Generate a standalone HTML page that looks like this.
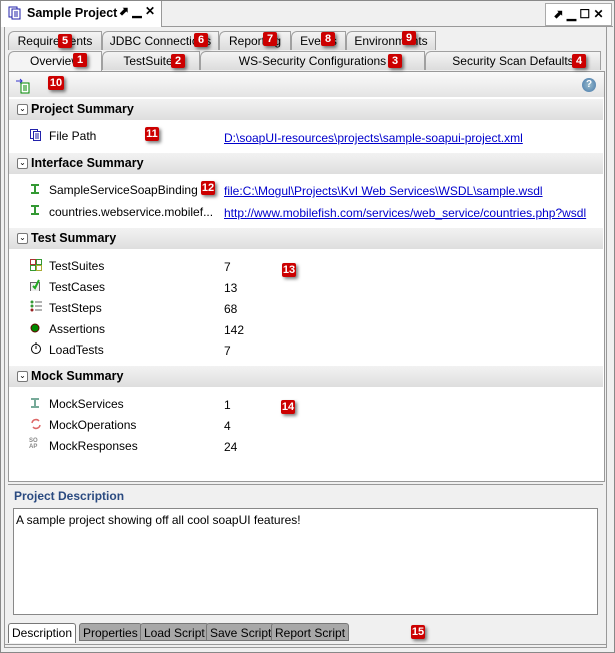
<!DOCTYPE html>
<html><head><style>
body{margin:0;width:615px;height:653px;background:#f0f0f0;font-family:"Liberation Sans",sans-serif;font-size:12px;color:#000;position:relative;overflow:hidden}
.a{position:absolute}
.tab{position:absolute;height:19px;border:1px solid #a0a0a0;border-bottom:none;background:linear-gradient(#f4f4f4,#dcdcdc);text-align:center;line-height:19px;font-size:12px;box-sizing:border-box;border-top-left-radius:6px}
.b{position:absolute;width:14px;height:14px;background:#c00;color:#fff;font-weight:bold;font-size:11px;line-height:14px;text-align:center;border-radius:2px;box-shadow:2px 2px 3px rgba(0,0,0,.5)}
.hd{position:absolute;left:9px;width:594px;height:21px;background:linear-gradient(#f2f2f2,#dedede);font-weight:bold;font-size:12.5px;line-height:21px}
.hd span.t{position:absolute;left:8px;top:5px;width:9px;height:9px;border:1px solid #777;border-radius:2px;background:#fff;font-size:8px;line-height:8px;text-align:center;font-weight:normal}
.hd b{position:absolute;left:22px}
.r{position:absolute;left:49px;font-size:12px}
.v{position:absolute;left:224px;font-size:12px}
.l{position:absolute;left:224px;color:#00c;text-decoration:underline}
.ic{position:absolute;left:30px;width:12px;height:12px}
.bt{position:absolute;top:623px;height:18px;border:1px solid #777;border-radius:3px 3px 0 0;background:#a8a8a8;line-height:18px;font-size:12px;box-sizing:border-box;padding:0 3px}
</style></head><body>
<!-- outer frame -->
<div class="a" style="left:0;top:0;width:613px;height:651px;border:1px solid #888"></div>
<div class="a" style="left:4px;top:27px;width:1px;height:620px;background:#999"></div>
<div class="a" style="left:606px;top:27px;width:1px;height:620px;background:#999"></div>
<div class="a" style="left:4px;top:647px;width:603px;height:1px;background:#999"></div>
<div class="a" style="left:1px;top:1px;width:160px;height:26px;background:#fff;border-right:1px solid #999"></div>
<div class="a" style="left:161px;top:26px;width:452px;height:1px;background:#999"></div>
<svg class="a" style="left:8px;top:6px" width="14" height="14"><rect x="1" y="1" width="8" height="10" fill="#fff" stroke="#22a"/><rect x="4" y="3" width="8" height="10" fill="#fff" stroke="#22a"/><path d="M6 6h4M6 8h4M6 10h4" stroke="#22a"/></svg>
<div class="a" style="left:27px;top:6px;font-weight:bold;font-size:12.5px">Sample Project</div>
<div class="a" style="left:119px;top:4px;font-size:12px;font-weight:bold">⬈ ▁ ✕</div>
<div class="a" style="left:545px;top:3px;width:65px;height:21px;border:1px solid #aaa;background:#fff;font-size:12px;font-weight:bold;line-height:20px;text-align:center">⬈ ▁ ☐ ✕</div>
<!-- tabs back row -->
<div class="tab" style="left:8px;top:31px;width:94px">Requirements</div>
<div class="tab" style="left:102px;top:31px;width:117px">JDBC Connections</div>
<div class="tab" style="left:219px;top:31px;width:72px">Reporting</div>
<div class="tab" style="left:291px;top:31px;width:55px">Events</div>
<div class="tab" style="left:346px;top:31px;width:90px">Environments</div>
<!-- front row -->
<div class="tab" style="left:8px;top:51px;width:94px;height:21px;background:#f4f4f4">Overview</div>
<div class="tab" style="left:102px;top:51px;width:98px">TestSuites</div>
<div class="tab" style="left:200px;top:51px;width:225px">WS-Security Configurations</div>
<div class="tab" style="left:425px;top:51px;width:176px">Security Scan Defaults</div>
<!-- content panel -->
<div class="a" style="left:8px;top:71px;width:595px;height:409px;background:#fff;border:1px solid #999"></div>
<div class="a" style="left:9px;top:72px;width:595px;height:25px;background:linear-gradient(#fafafa,#e4e4e4)"></div>
<svg class="a" style="left:15px;top:78px" width="16" height="16"><path d="M1 3h6M5 1l2 2-2 2" stroke="#33c" fill="none"/><rect x="6" y="5" width="8" height="10" fill="#fff" stroke="#080"/><path d="M8 8h4M8 10h4M8 12h4" stroke="#080"/></svg>
<div class="a" style="left:582px;top:78px;width:14px;height:14px;border-radius:50%;background:radial-gradient(#9bc,#47a);color:#fff;font-size:10px;font-weight:bold;text-align:center;line-height:14px">?</div>

<div class="hd" style="top:99px"><span class="t">⌄</span><b>Project Summary</b></div>
<svg class="ic" style="top:129px" width="12" height="13"><rect x="0.5" y="0.5" width="7" height="9" fill="#fff" stroke="#22a"/><rect x="3.5" y="2.5" width="7" height="9" fill="#fff" stroke="#22a"/><path d="M5 5h4M5 7h4M5 9h4" stroke="#22a"/></svg>
<div class="r" style="top:129px">File Path</div>
<div class="l" style="top:131px">D:\soapUI-resources\projects\sample-soapui-project.xml</div>

<div class="hd" style="top:153px"><span class="t">⌄</span><b>Interface Summary</b></div>
<svg class="ic" style="top:183px" width="12" height="12"><path d="M1 1h8v2H6v6h3v2H1V9h3V3H1z" fill="#393"/></svg>
<div class="r" style="top:183px">SampleServiceSoapBinding</div>
<div class="l" style="top:184px">file:C:\Mogul\Projects\KvI Web Services\WSDL\sample.wsdl</div>
<svg class="ic" style="top:204px" width="12" height="12"><path d="M1 1h8v2H6v6h3v2H1V9h3V3H1z" fill="#393"/></svg>
<div class="r" style="top:205px">countries.webservice.mobilef...</div>
<div class="l" style="top:206px">http://www.mobilefish.com/services/web_service/countries.php?wsdl</div>

<div class="hd" style="top:228px"><span class="t">⌄</span><b>Test Summary</b></div>
<svg class="ic" style="top:259px" width="12" height="12"><rect x="0.5" y="0.5" width="5" height="5" fill="#fff" stroke="#a33"/><rect x="6.5" y="0.5" width="5" height="5" fill="#fff" stroke="#393"/><rect x="0.5" y="6.5" width="5" height="5" fill="#fff" stroke="#393"/><rect x="6.5" y="6.5" width="5" height="5" fill="#fff" stroke="#aa3"/></svg>
<div class="r" style="top:259px">TestSuites</div><div class="v" style="top:260px">7</div>
<svg class="ic" style="top:279px" width="12" height="13"><rect x="0.5" y="3.5" width="9" height="9" fill="#eee" stroke="#666"/><path d="M3 7l2 2 4-8" stroke="#2a2" stroke-width="2" fill="none"/></svg>
<div class="r" style="top:280px">TestCases</div><div class="v" style="top:281px">13</div>
<svg class="ic" style="top:300px" width="13" height="12"><circle cx="2" cy="2" r="1.5" fill="#393"/><circle cx="2" cy="6" r="1.5" fill="#393"/><circle cx="2" cy="10" r="1.5" fill="#922"/><path d="M5 2h7M5 6h7M5 10h7" stroke="#666"/></svg>
<div class="r" style="top:301px">TestSteps</div><div class="v" style="top:302px">68</div>
<svg class="ic" style="top:322px" width="12" height="12"><circle cx="5" cy="6" r="4" fill="#080" stroke="#600"/></svg>
<div class="r" style="top:322px">Assertions</div><div class="v" style="top:323px">142</div>
<svg class="ic" style="top:342px" width="12" height="13"><circle cx="6" cy="7" r="4.5" fill="#fff" stroke="#000"/><path d="M6 7V4M5 1h2" stroke="#000"/></svg>
<div class="r" style="top:343px">LoadTests</div><div class="v" style="top:344px">7</div>

<div class="hd" style="top:366px"><span class="t">⌄</span><b>Mock Summary</b></div>
<svg class="ic" style="top:397px" width="12" height="12"><path d="M1 1h8v2H6v6h3v2H1V9h3V3H1z" fill="#7a9"/></svg>
<div class="r" style="top:397px">MockServices</div><div class="v" style="top:398px">1</div>
<svg class="ic" style="top:418px" width="12" height="12"><path d="M2 5a4 4 0 0 1 7-2M10 7a4 4 0 0 1-7 2" stroke="#d66" fill="none" stroke-width="1.5"/></svg>
<div class="r" style="top:418px">MockOperations</div><div class="v" style="top:419px">4</div>
<div class="a" style="left:29px;top:438px;font-size:6px;line-height:6px;color:#888;font-weight:bold">SO<br>AP</div>
<div class="r" style="top:439px">MockResponses</div><div class="v" style="top:440px">24</div>

<!-- description -->
<div class="a" style="left:8px;top:484px;width:595px;height:1px;background:#999"></div>
<div class="a" style="left:14px;top:489px;font-weight:bold;font-size:12px;color:#2a4a80">Project Description</div>
<div class="a" style="left:13px;top:508px;width:583px;height:105px;background:#fff;border:1px solid #888"></div>
<div class="a" style="left:16px;top:513px">A sample project showing off all cool soapUI features!</div>
<div class="bt" style="left:8px;top:623px;height:20px;background:#fff;border-bottom:none">Description</div>
<div class="bt" style="left:79px">Properties</div>
<div class="bt" style="left:140px">Load Script</div>
<div class="bt" style="left:206px">Save Script</div>
<div class="bt" style="left:271px">Report Script</div>
<div class="a" style="left:4px;top:644px;width:603px;height:1px;background:#999"></div>

<!-- badges -->
<div class="b" style="left:73px;top:53px">1</div>
<div class="b" style="left:171px;top:54px">2</div>
<div class="b" style="left:388px;top:54px">3</div>
<div class="b" style="left:572px;top:54px">4</div>
<div class="b" style="left:58px;top:34px">5</div>
<div class="b" style="left:194px;top:33px">6</div>
<div class="b" style="left:263px;top:32px">7</div>
<div class="b" style="left:321px;top:32px">8</div>
<div class="b" style="left:402px;top:31px">9</div>
<div class="b" style="left:48px;top:76px;width:16px">10</div>
<div class="b" style="left:145px;top:127px">11</div>
<div class="b" style="left:201px;top:181px">12</div>
<div class="b" style="left:282px;top:263px">13</div>
<div class="b" style="left:281px;top:400px">14</div>
<div class="b" style="left:411px;top:625px">15</div>
</body></html>
